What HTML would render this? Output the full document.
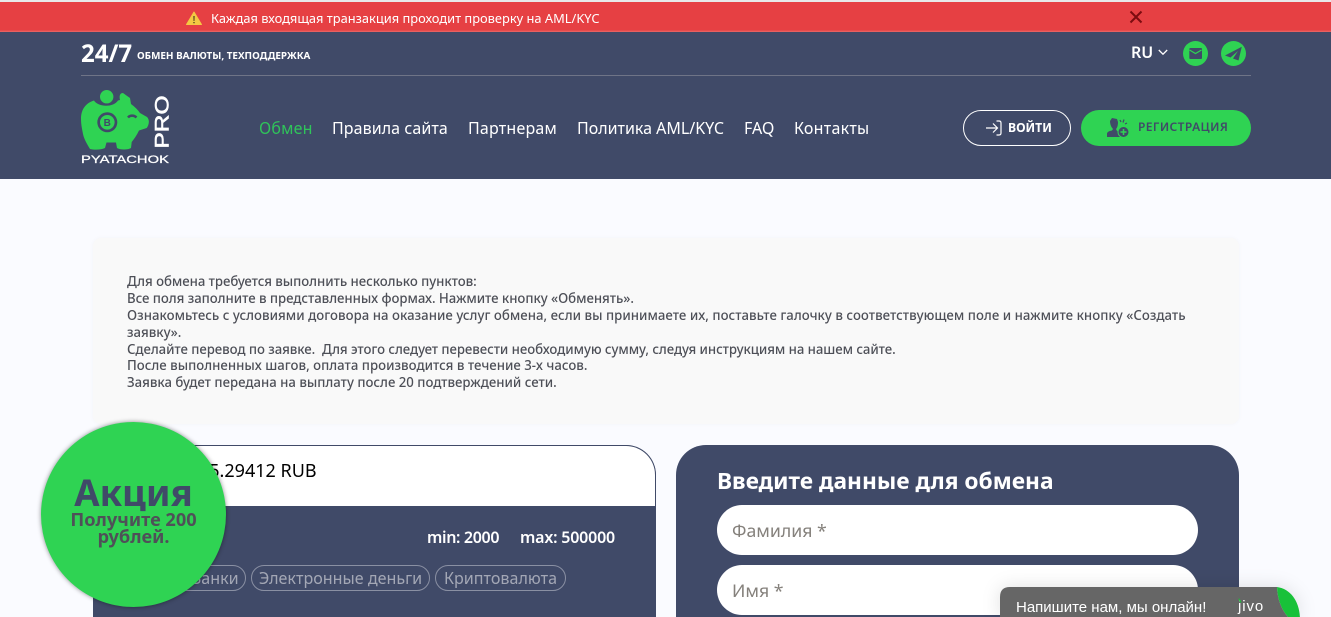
<!DOCTYPE html>
<html lang="ru"><head><meta charset="utf-8"><title>Pyatachok</title>
<style>
html,body{margin:0;padding:0;width:1331px;height:617px;overflow:hidden;background:#fafbff}
body{position:relative;font-family:"Noto Sans","Open Sans","Liberation Sans","Noto Sans CJK SC",sans-serif}
.a{position:absolute;white-space:nowrap}
.nav{top:117px;font-size:16px;line-height:22px;color:#fff}
.p{left:127px;font-size:13.2px;line-height:17px;color:#4d4f57;font-weight:500}
.tag{top:565px;height:26px;box-sizing:border-box;border:1px solid #8a90a3;border-radius:14px;color:#a3a7b5;font-size:16.1px;line-height:25px;text-align:center}
.inp{left:717px;width:481px;height:50px;background:#fff;border-radius:25px}
.ph{left:732px;font-size:17.700px;line-height:24px;color:#85817c}
</style></head><body>
<div class="a" style="left:0;top:0;width:1331px;height:2px;background:#e8e8e8"></div>
<div class="a" style="left:0;top:2px;width:1331px;height:30px;background:linear-gradient(#e64043 0,#e64043 28px,#e96a6a 30px)"></div>
<svg class="a" style="left:186px;top:11px" width="16" height="14" viewBox="0 0 16 14"><path d="M8 1L15.500 13.500H.5z" fill="#f4c843" stroke="#f4c843" stroke-linejoin="round"/><path d="M7.300 5h1.400l-.2 5h-1zM7.300 11h1.400v1.300H7.300z" fill="#5b4a20"/></svg>
<div class="a" style="left:211px;top:9px;font-size:12.870px;line-height:18px;color:#fff">Каждая входящая транзакция проходит проверку на AML/KYC</div>
<svg class="a" style="left:1129px;top:10px" width="14" height="14" viewBox="0 0 14 14"><path d="M1.500 1.500l11 11M12.500 1.500l-11 11" stroke="#7c0c10" stroke-width="2"/></svg>

<div class="a" style="left:0;top:32px;width:1331px;height:147px;background:#404a68"></div>
<div class="a" style="left:81px;top:38px;font-size:24px;line-height:32px;font-weight:700;color:#fff">24/7</div>
<div class="a" style="left:137px;top:47px;font-size:9.900px;line-height:16px;font-weight:700;color:#fff">ОБМЕН ВАЛЮТЫ, ТЕХПОДДЕРЖКА</div>
<div class="a" style="left:81px;top:75px;width:1170px;height:1px;background:#6f7487"></div>

<svg class="a" style="left:81px;top:89px" width="90" height="76" viewBox="0 0 90 76">
<circle cx="25.700" cy="7.700" r="6.700" fill="#2fd353"/>
<path d="M0 30C0 20 5 14 13 11.500C17 18 32 19 37 11.500L39 11C38 7 39 4 42 4L49 9L50 15C54 18 57 21 59 24L66 28C69 31 68 36 65.700 39L58 41.500C56 46 53 50 50.700 53L50 59C47 61 39 61 36 59L35 53.500H25.500L24 59C20 61 13 61 9 60C6 55 3 50 2 45C1 40 0 35 0 30z" fill="#2fd353"/>
<circle cx="26.300" cy="33.300" r="10" fill="#404a68"/><circle cx="26.300" cy="33.300" r="7.300" fill="#2fd353"/>
<text x="26.300" y="37" font-size="10" font-weight="700" fill="#404a68" text-anchor="middle" font-family="Liberation Sans">B</text>
<path d="M47 28.500c2-2.500 6-2.500 8.500 0" stroke="#404a68" stroke-width="2.400" fill="none"/>
<text transform="translate(87.500,59.500) rotate(-90)" font-family="Liberation Sans" font-size="19.500" fill="#fff" stroke="#fff" stroke-width=".6" textLength="53" lengthAdjust="spacingAndGlyphs">PRO</text>
<text x="0" y="74" font-family="Liberation Sans" font-size="11" fill="#fff" stroke="#fff" stroke-width=".25" textLength="88" lengthAdjust="spacingAndGlyphs">PYATACHOK</text>
</svg>

<div class="a nav" style="left:259px;color:#2fc45a;letter-spacing:.2px">Обмен</div>
<div class="a nav" style="left:332px;letter-spacing:.08px">Правила сайта</div>
<div class="a nav" style="left:468px;letter-spacing:.2px">Партнерам</div>
<div class="a nav" style="left:577px">Политика AML/KYC</div>
<div class="a nav" style="left:744px">FAQ</div>
<div class="a nav" style="left:794px;letter-spacing:.25px">Контакты</div>

<div class="a" style="left:1131px;top:41px;font-size:16px;line-height:22px;font-weight:600;color:#fff">RU</div>
<svg class="a" style="left:1158px;top:49px" width="10" height="7" viewBox="0 0 10 7"><path d="M.8 1l4.200 4.200L9.200 1" stroke="#fff" stroke-width="1.300" fill="none"/></svg>
<svg class="a" style="left:1183px;top:41px" width="25" height="25" viewBox="0 0 25 25"><circle cx="12.500" cy="12.500" r="12.500" fill="#2fd353"/><rect x="6.300" y="7" width="12.700" height="11" rx="1" fill="#404a68"/><path d="M6.500 9l6 3.500 6-3.500" stroke="#2fd353" stroke-width="1.200" fill="none"/></svg>
<svg class="a" style="left:1221px;top:41px" width="25" height="25" viewBox="0 0 25 25"><circle cx="12.500" cy="12.500" r="12.500" fill="#2fd353"/><path d="M20.800 5.700L4 14.500l5.500 2L17 10l-5 7.500 5.500 2z" fill="#404a68"/></svg>

<div class="a" style="left:963px;top:110px;width:108px;height:36px;box-sizing:border-box;border:1px solid #fff;border-radius:18px"></div>
<svg class="a" style="left:985px;top:120px" width="17" height="16" viewBox="0 0 17 16"><path d="M1 8h11M8 3.500L12.500 8 8 12.500M11.500 1h2.500c1.500 0 2 1 2 2v10c0 1-.5 2-2 2h-2.500" stroke="#fff" stroke-width="1.200" fill="none"/></svg>
<div class="a" style="left:1008px;top:119px;font-size:12.200px;line-height:18px;font-weight:700;color:#fff">ВОЙТИ</div>
<div class="a" style="left:1081px;top:110px;width:170px;height:36px;background:#2fd353;border-radius:18px"></div>
<svg class="a" style="left:1106px;top:117px" width="24" height="22" viewBox="0 0 24 22"><path d="M6 1l5 1 1 3c0 4-1 6-2 7l1 2c2 .5 3 1 3.500 2v4H1v-3c0-2 2-3 5-3.500l1-1.500C5 10 4 7 4 4z" fill="#404a68"/><circle cx="17.500" cy="15" r="5.500" fill="#404a68" stroke="#2fd353" stroke-width="1"/><path d="M17.500 12v6M14.500 15h6" stroke="#2fd353" stroke-width="1.500"/><path d="M14 3l1 2M18 2.500l-1 3M21 6l-2 1" stroke="#404a68" stroke-width="1.200"/></svg>
<div class="a" style="left:1138px;top:118px;font-size:12px;line-height:18px;font-weight:600;letter-spacing:.4px;color:#404a68">РЕГИСТРАЦИЯ</div>

<div class="a" style="left:93px;top:238px;width:1146px;height:186px;background:#f9f9f9;border-radius:8px;box-shadow:0 0 5px rgba(0,0,0,.03)"></div>
<div class="a p" style="top:273px;letter-spacing:-.04px">Для обмена требуется выполнить несколько пунктов:</div>
<div class="a p" style="top:290px;letter-spacing:-.04px">Все поля заполните в представленных формах. Нажмите кнопку «Обменять».</div>
<div class="a p" style="top:307px;letter-spacing:.033px">Ознакомьтесь с условиями договора на оказание услуг обмена, если вы принимаете их, поставьте галочку в соответствующем поле и нажмите кнопку «Создать</div>
<div class="a p" style="top:324px">заявку».</div>
<div class="a p" style="top:341px;letter-spacing:-.053px">Сделайте перевод по заявке.&nbsp; Для этого следует перевести необходимую сумму, следуя инструкциям на нашем сайте.</div>
<div class="a p" style="top:357px;letter-spacing:.015px">После выполненных шагов, оплата производится в течение 3-х часов.</div>
<div class="a p" style="top:374px">Заявка будет передана на выплату после 20 подтверждений сети.</div>

<div class="a" style="left:93px;top:445px;width:563px;height:172px;box-sizing:border-box;background:#404a68;border-radius:30px 30px 0 0;overflow:hidden">
<div style="height:61px;box-sizing:border-box;background:#fff;border:1px solid #404a68;border-bottom:0;border-radius:30px 30px 0 0"></div>
</div>
<div class="a" style="left:169px;top:459px;font-size:18px;line-height:24px;color:#000">1 = 85.29412 RUB</div>
<div class="a" style="left:427px;top:526px;font-size:16px;letter-spacing:-.35px;line-height:22px;font-weight:600;color:#fff">min: 2000</div>
<div class="a" style="left:520px;top:526px;font-size:16px;letter-spacing:-.2px;line-height:22px;font-weight:600;color:#fff">max: 500000</div>
<div class="a tag" style="left:170px;width:76px;padding-left:14px">Банки</div>
<div class="a tag" style="left:251px;width:179px">Электронные деньги</div>
<div class="a tag" style="left:435px;width:131px">Криптовалюта</div>

<div class="a" style="left:41px;top:422px;width:185px;height:185px;background:#2fd353;border-radius:50%;box-shadow:0 0 5px rgba(0,0,0,.45)"></div>
<div class="a" style="left:41px;top:468px;width:185px;text-align:center;font-size:36.600px;line-height:48px;font-weight:700;color:#404a68">Акция</div>
<div class="a" style="left:41px;top:512px;width:185px;text-align:center;font-size:18.200px;line-height:17px;font-weight:700;color:#4f5058">Получите 200<br>рублей.</div>

<div class="a" style="left:676px;top:445px;width:563px;height:172px;background:#404a68;border-radius:30px 30px 0 0"></div>
<div class="a" style="left:717px;top:466px;font-size:22.750px;line-height:30px;font-weight:700;color:#fff">Введите данные для обмена</div>
<div class="a inp" style="top:505px"></div>
<div class="a ph" style="top:519px">Фамилия *</div>
<div class="a inp" style="top:565px"></div>
<div class="a ph" style="top:579px">Имя *</div>

<svg class="a" style="left:980px;top:567px;filter:drop-shadow(0 0 9px rgba(0,0,0,.12))" width="351" height="50" viewBox="980 567 351 50"><path d="M1000 620V597Q1000 587 1010 587H1277Q1278 608 1291 620z" fill="#666"/><path d="M1277 587Q1278 608 1291 620H1300C1300 602 1291 589 1277 587z" fill="#18c139"/></svg>
<div class="a" style="left:1016px;top:599px;font-family:'Liberation Sans',sans-serif;font-size:15px;line-height:18px;color:#fff">Напишите нам, мы онлайн!</div>
<div class="a" style="left:1238px;top:598px;font-family:'Liberation Sans',sans-serif;font-size:15px;letter-spacing:.9px;line-height:18px;color:#fff">jivo</div>
<svg class="a" style="left:1238px;top:598px" width="5" height="6" viewBox="0 0 5 6"><path d="M.5 0Q3 2 3.500 5Q1 4 .5 0z" fill="#18c139"/></svg>
</body></html>
